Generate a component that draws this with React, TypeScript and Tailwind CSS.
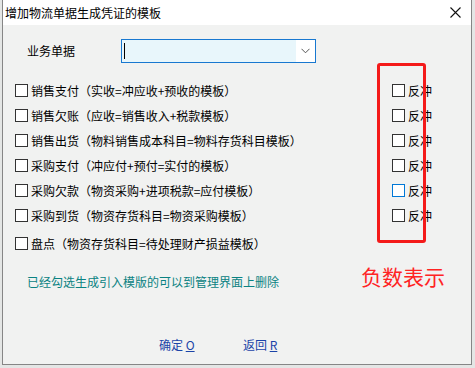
import React from "react";

const font = { fontFamily: "'Noto Sans CJK SC', 'Noto Sans', sans-serif" };

// ── CheckBox ──────────────────────────────────────────────────────
function CheckBox({ focused = false }: { focused?: boolean }) {
  return (
    <span
      className={
        "inline-block w-[13px] h-[13px] shrink-0 bg-white border " +
        (focused ? "border-[#0078d7]" : "border-[#333333]")
      }
    />
  );
}

const rows = [
  "销售支付（实收=冲应收+预收的模板）",
  "销售欠账（应收=销售收入+税款模板）",
  "销售出货（物料销售成本科目=物料存货科目模板）",
  "采购支付（冲应付+预付=实付的模板）",
  "采购欠款（物资采购+进项税款=应付模板）",
  "采购到货（物资存货科目=物资采购模板）",
];

export default function App() {
  return (
    <div className="relative w-[475px] h-[368px] overflow-hidden bg-[#e4e6e5] text-[12px] text-black" style={font}>
      <div className="ml-[2px] w-[470px] h-[365px] flex flex-col border-x border-b border-[#868686]">
        {/* title bar */}
        <div className="h-[25px] bg-white flex items-center pl-[2px] pr-[10px]">
          <span className="leading-none">增加物流单据生成凭证的模板</span>
          <svg className="ml-auto" width="11" height="11" viewBox="0 0 11 11">
            <path d="M0.5 0.5L10.5 10.5M10.5 0.5L0.5 10.5" stroke="#111" strokeWidth="1.1" />
          </svg>
        </div>

        {/* body */}
        <div className="flex-1 bg-[#f1f2f1] flex flex-col">
          <div className="mt-[14px] flex items-center h-[24px]">
            <span className="ml-[24px] w-[94px]">业务单据</span>
            <div className="w-[195px] h-[24px] border border-[#1878d0] flex items-stretch">
              <div className="flex-1 bg-[#e8f6fb] flex items-center pl-[2px]">
                <span className="w-px h-[16px] bg-black" />
              </div>
              <div className="w-[19px] bg-white flex items-center justify-center">
                <svg width="9" height="6" viewBox="0 0 9 6">
                  <path d="M0.5 0.8L4.5 4.8L8.5 0.8" fill="none" stroke="#555" strokeWidth="1" />
                </svg>
              </div>
            </div>
          </div>

          <div className="mt-[15px] flex flex-col">
            {rows.map((r, i) => (
              <div key={r} className="h-[25px] grid grid-cols-[389px_1fr] items-center">
                <div className="flex items-center gap-[3px] pl-[12px]">
                  <CheckBox />
                  <span className="leading-none whitespace-nowrap">{r}</span>
                </div>
                <div className="flex items-center gap-[3px]">
                  <CheckBox focused={i === 4} />
                  <span className="leading-none">反冲</span>
                </div>
              </div>
            ))}
            <div className="mt-[3px] h-[25px] flex items-center gap-[3px] pl-[12px]">
              <CheckBox />
              <span className="leading-none">盘点（物资存货科目=待处理财产损益模板）</span>
            </div>
          </div>

          <div className="mt-[8px] grid grid-cols-[358px_1fr] items-start">
            <span className="mt-[10px] pl-[24px] leading-[16px] text-[#0a8282] whitespace-nowrap">
              已经勾选生成引入模版的可以到管理界面上删除
            </span>
            <span className="text-[21px] leading-[24px] text-[#ff2424]">负数表示</span>
          </div>

          <div className="mt-[47px] flex pl-[156px] leading-[16px] text-[#1a44a8]">
            <span className="w-[84px]">
              确定 <span className="underline">O</span>
            </span>
            <span>
              返回 <span className="underline">R</span>
            </span>
          </div>
        </div>
      </div>

      {/* annotation */}
      <div className="absolute left-[377px] top-[63px] w-[49px] h-[180px] border-[3px] border-[#f41a1a] rounded-[3px]" />
    </div>
  );
}
